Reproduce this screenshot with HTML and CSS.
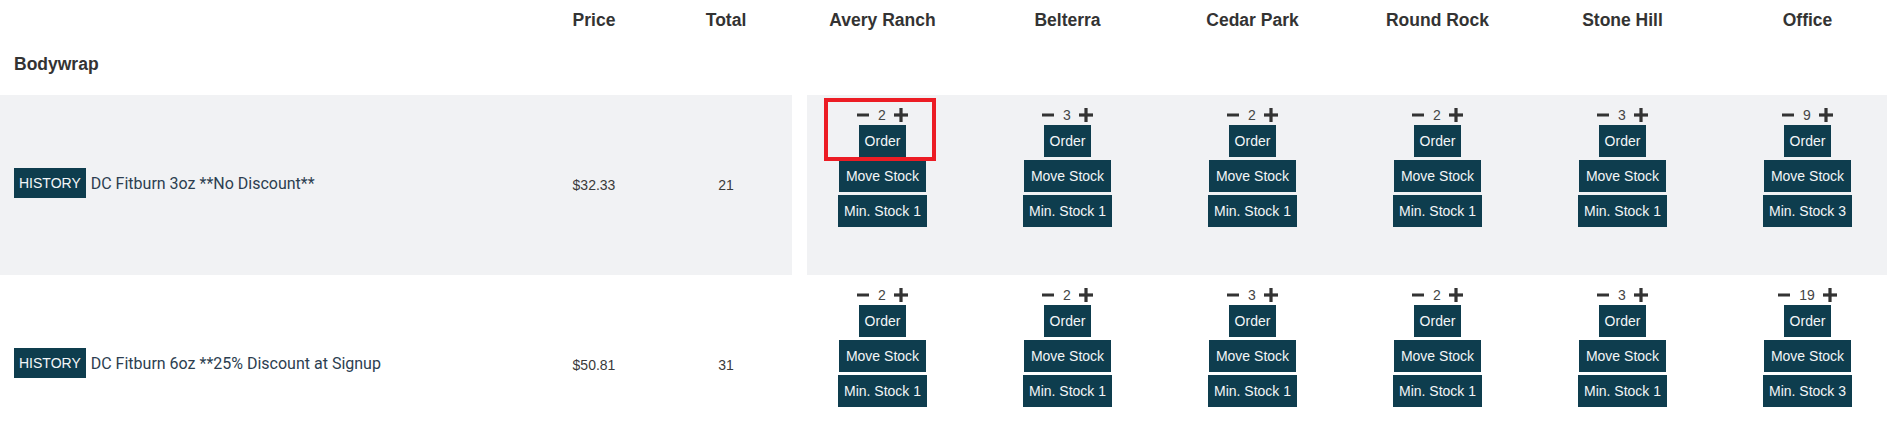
FILE: index.html
```html
<!DOCTYPE html>
<html>
<head>
<meta charset="utf-8">
<link rel="stylesheet" href="styles.css">
</head>
<body>
<div class="sheet">
  <div class="row head">
    <div class="left">
      <div class="c-name"></div>
      <div class="c-num">Price</div>
      <div class="c-num">Total</div>
    </div>
    <div class="right">
      <div class="store-h"><span>Avery Ranch</span></div>
      <div class="store-h"><span>Belterra</span></div>
      <div class="store-h"><span>Cedar Park</span></div>
      <div class="store-h"><span>Round Rock</span></div>
      <div class="store-h"><span>Stone Hill</span></div>
      <div class="store-h"><span>Office</span></div>
    </div>
  </div>

  <div class="group">Bodywrap</div>

  <div class="row item alt">
    <div class="left">
      <div class="c-name"><span class="btn hist">HISTORY</span><span class="pname">DC Fitburn 3oz **No Discount**</span></div>
      <div class="c-num val">$32.33</div>
      <div class="c-num val">21</div>
    </div>
    <div class="right">
      <div class="store focus">
        <div class="qty"><svg class="minus" width="12" height="14" viewBox="0 0 12 14"><rect x="0" y="5.5" width="12" height="3"/></svg><span class="n">2</span><svg class="plus" width="14" height="14" viewBox="0 0 14 14"><rect x="0" y="5.4" width="14" height="3.2"/><rect x="5.4" y="0" width="3.2" height="14"/></svg></div>
        <span class="btn order">Order</span><span class="btn move">Move Stock</span><span class="btn min">Min. Stock 1</span>
        <div class="focus-ring"></div>
      </div>
      <div class="store">
        <div class="qty"><svg class="minus" width="12" height="14" viewBox="0 0 12 14"><rect x="0" y="5.5" width="12" height="3"/></svg><span class="n">3</span><svg class="plus" width="14" height="14" viewBox="0 0 14 14"><rect x="0" y="5.4" width="14" height="3.2"/><rect x="5.4" y="0" width="3.2" height="14"/></svg></div>
        <span class="btn order">Order</span><span class="btn move">Move Stock</span><span class="btn min">Min. Stock 1</span>
      </div>
      <div class="store">
        <div class="qty"><svg class="minus" width="12" height="14" viewBox="0 0 12 14"><rect x="0" y="5.5" width="12" height="3"/></svg><span class="n">2</span><svg class="plus" width="14" height="14" viewBox="0 0 14 14"><rect x="0" y="5.4" width="14" height="3.2"/><rect x="5.4" y="0" width="3.2" height="14"/></svg></div>
        <span class="btn order">Order</span><span class="btn move">Move Stock</span><span class="btn min">Min. Stock 1</span>
      </div>
      <div class="store">
        <div class="qty"><svg class="minus" width="12" height="14" viewBox="0 0 12 14"><rect x="0" y="5.5" width="12" height="3"/></svg><span class="n">2</span><svg class="plus" width="14" height="14" viewBox="0 0 14 14"><rect x="0" y="5.4" width="14" height="3.2"/><rect x="5.4" y="0" width="3.2" height="14"/></svg></div>
        <span class="btn order">Order</span><span class="btn move">Move Stock</span><span class="btn min">Min. Stock 1</span>
      </div>
      <div class="store">
        <div class="qty"><svg class="minus" width="12" height="14" viewBox="0 0 12 14"><rect x="0" y="5.5" width="12" height="3"/></svg><span class="n">3</span><svg class="plus" width="14" height="14" viewBox="0 0 14 14"><rect x="0" y="5.4" width="14" height="3.2"/><rect x="5.4" y="0" width="3.2" height="14"/></svg></div>
        <span class="btn order">Order</span><span class="btn move">Move Stock</span><span class="btn min">Min. Stock 1</span>
      </div>
      <div class="store">
        <div class="qty"><svg class="minus" width="12" height="14" viewBox="0 0 12 14"><rect x="0" y="5.5" width="12" height="3"/></svg><span class="n">9</span><svg class="plus" width="14" height="14" viewBox="0 0 14 14"><rect x="0" y="5.4" width="14" height="3.2"/><rect x="5.4" y="0" width="3.2" height="14"/></svg></div>
        <span class="btn order">Order</span><span class="btn move">Move Stock</span><span class="btn min">Min. Stock 3</span>
      </div>
    </div>
  </div>

  <div class="row item">
    <div class="left">
      <div class="c-name"><span class="btn hist">HISTORY</span><span class="pname">DC Fitburn 6oz **25% Discount at Signup</span></div>
      <div class="c-num val">$50.81</div>
      <div class="c-num val">31</div>
    </div>
    <div class="right">
      <div class="store">
        <div class="qty"><svg class="minus" width="12" height="14" viewBox="0 0 12 14"><rect x="0" y="5.5" width="12" height="3"/></svg><span class="n">2</span><svg class="plus" width="14" height="14" viewBox="0 0 14 14"><rect x="0" y="5.4" width="14" height="3.2"/><rect x="5.4" y="0" width="3.2" height="14"/></svg></div>
        <span class="btn order">Order</span><span class="btn move">Move Stock</span><span class="btn min">Min. Stock 1</span>
      </div>
      <div class="store">
        <div class="qty"><svg class="minus" width="12" height="14" viewBox="0 0 12 14"><rect x="0" y="5.5" width="12" height="3"/></svg><span class="n">2</span><svg class="plus" width="14" height="14" viewBox="0 0 14 14"><rect x="0" y="5.4" width="14" height="3.2"/><rect x="5.4" y="0" width="3.2" height="14"/></svg></div>
        <span class="btn order">Order</span><span class="btn move">Move Stock</span><span class="btn min">Min. Stock 1</span>
      </div>
      <div class="store">
        <div class="qty"><svg class="minus" width="12" height="14" viewBox="0 0 12 14"><rect x="0" y="5.5" width="12" height="3"/></svg><span class="n">3</span><svg class="plus" width="14" height="14" viewBox="0 0 14 14"><rect x="0" y="5.4" width="14" height="3.2"/><rect x="5.4" y="0" width="3.2" height="14"/></svg></div>
        <span class="btn order">Order</span><span class="btn move">Move Stock</span><span class="btn min">Min. Stock 1</span>
      </div>
      <div class="store">
        <div class="qty"><svg class="minus" width="12" height="14" viewBox="0 0 12 14"><rect x="0" y="5.5" width="12" height="3"/></svg><span class="n">2</span><svg class="plus" width="14" height="14" viewBox="0 0 14 14"><rect x="0" y="5.4" width="14" height="3.2"/><rect x="5.4" y="0" width="3.2" height="14"/></svg></div>
        <span class="btn order">Order</span><span class="btn move">Move Stock</span><span class="btn min">Min. Stock 1</span>
      </div>
      <div class="store">
        <div class="qty"><svg class="minus" width="12" height="14" viewBox="0 0 12 14"><rect x="0" y="5.5" width="12" height="3"/></svg><span class="n">3</span><svg class="plus" width="14" height="14" viewBox="0 0 14 14"><rect x="0" y="5.4" width="14" height="3.2"/><rect x="5.4" y="0" width="3.2" height="14"/></svg></div>
        <span class="btn order">Order</span><span class="btn move">Move Stock</span><span class="btn min">Min. Stock 1</span>
      </div>
      <div class="store">
        <div class="qty"><svg class="minus" width="12" height="14" viewBox="0 0 12 14"><rect x="0" y="5.5" width="12" height="3"/></svg><span class="n">19</span><svg class="plus" width="14" height="14" viewBox="0 0 14 14"><rect x="0" y="5.4" width="14" height="3.2"/><rect x="5.4" y="0" width="3.2" height="14"/></svg></div>
        <span class="btn order">Order</span><span class="btn move">Move Stock</span><span class="btn min">Min. Stock 3</span>
      </div>
    </div>
  </div>
</div>
</body>
</html>
```

FILE: styles.css
```css
html, body {
  margin: 0;
  padding: 0;
  background: #ffffff;
}
body {
  font-family: "Liberation Sans", Arial, sans-serif;
  color: #333333;
  width: 1895px;
  overflow: hidden;
}
.sheet {
  width: 1887px;
}
.row {
  display: grid;
  grid-template-columns: 792px 1080px;
  column-gap: 15px;
}
.left {
  display: grid;
  grid-template-columns: 528px 132px 132px;
  align-items: center;
}
.right {
  display: grid;
  grid-template-columns: repeat(6, 89px);
  justify-content: space-between;
  padding: 0 35px 0 31px;
}
.head {
  height: 40px;
}
.head .c-num,
.store-h {
  font-weight: bold;
  font-size: 17.5px;
  line-height: 40px;
  color: #333333;
}
.c-num {
  text-align: center;
}
.store-h {
  display: flex;
  justify-content: center;
  white-space: nowrap;
}
.group {
  height: 55px;
  box-sizing: border-box;
  padding: 14px 0 0 14px;
  font-weight: bold;
  font-size: 17.5px;
  line-height: 20px;
  color: #333333;
}
.item {
  height: 180px;
}
.item .left,
.item .right {
  height: 180px;
}
.alt .left,
.alt .right {
  background: #f1f2f4;
}
.c-name {
  display: flex;
  align-items: center;
  padding: 0 0 4px 14px;
}
.val {
  font-size: 14px;
  color: #3a3a3a;
}
.btn {
  display: inline-block;
  background: #0e3d4e;
  color: #f4f6f8;
  font-family: "Liberation Sans", Arial, sans-serif;
  font-size: 14px;
  white-space: nowrap;
}
.hist {
  height: 30px;
  line-height: 30px;
  padding: 0 5px;
  margin-right: 5px;
}
.pname {
  font-family: Roboto, "Liberation Sans", sans-serif;
  font-size: 16px;
  color: #2c3e50;
}
.store {
  display: flex;
  flex-direction: column;
  align-items: center;
  padding-top: 9px;
  box-sizing: border-box;
}
.store .btn {
  height: 32px;
  line-height: 32px;
}
.order {
  padding: 0 5.5px;
}
.move {
  padding: 0 7px;
  margin-top: 3px;
}
.min {
  padding: 0 6px;
  margin-top: 3px;
}
.qty {
  display: flex;
  align-items: center;
  height: 21px;
}
.qty svg {
  fill: #333333;
  display: block;
}
.qty .n {
  font-size: 14px;
  color: #444444;
  margin: 0 8px 0 9px;
}
.focus {
  position: relative;
}
.focus-ring {
  position: absolute;
  left: -14px;
  top: 3px;
  width: 112px;
  height: 63px;
  box-sizing: border-box;
  border: 4px solid #ec1c24;
  pointer-events: none;
}
```
